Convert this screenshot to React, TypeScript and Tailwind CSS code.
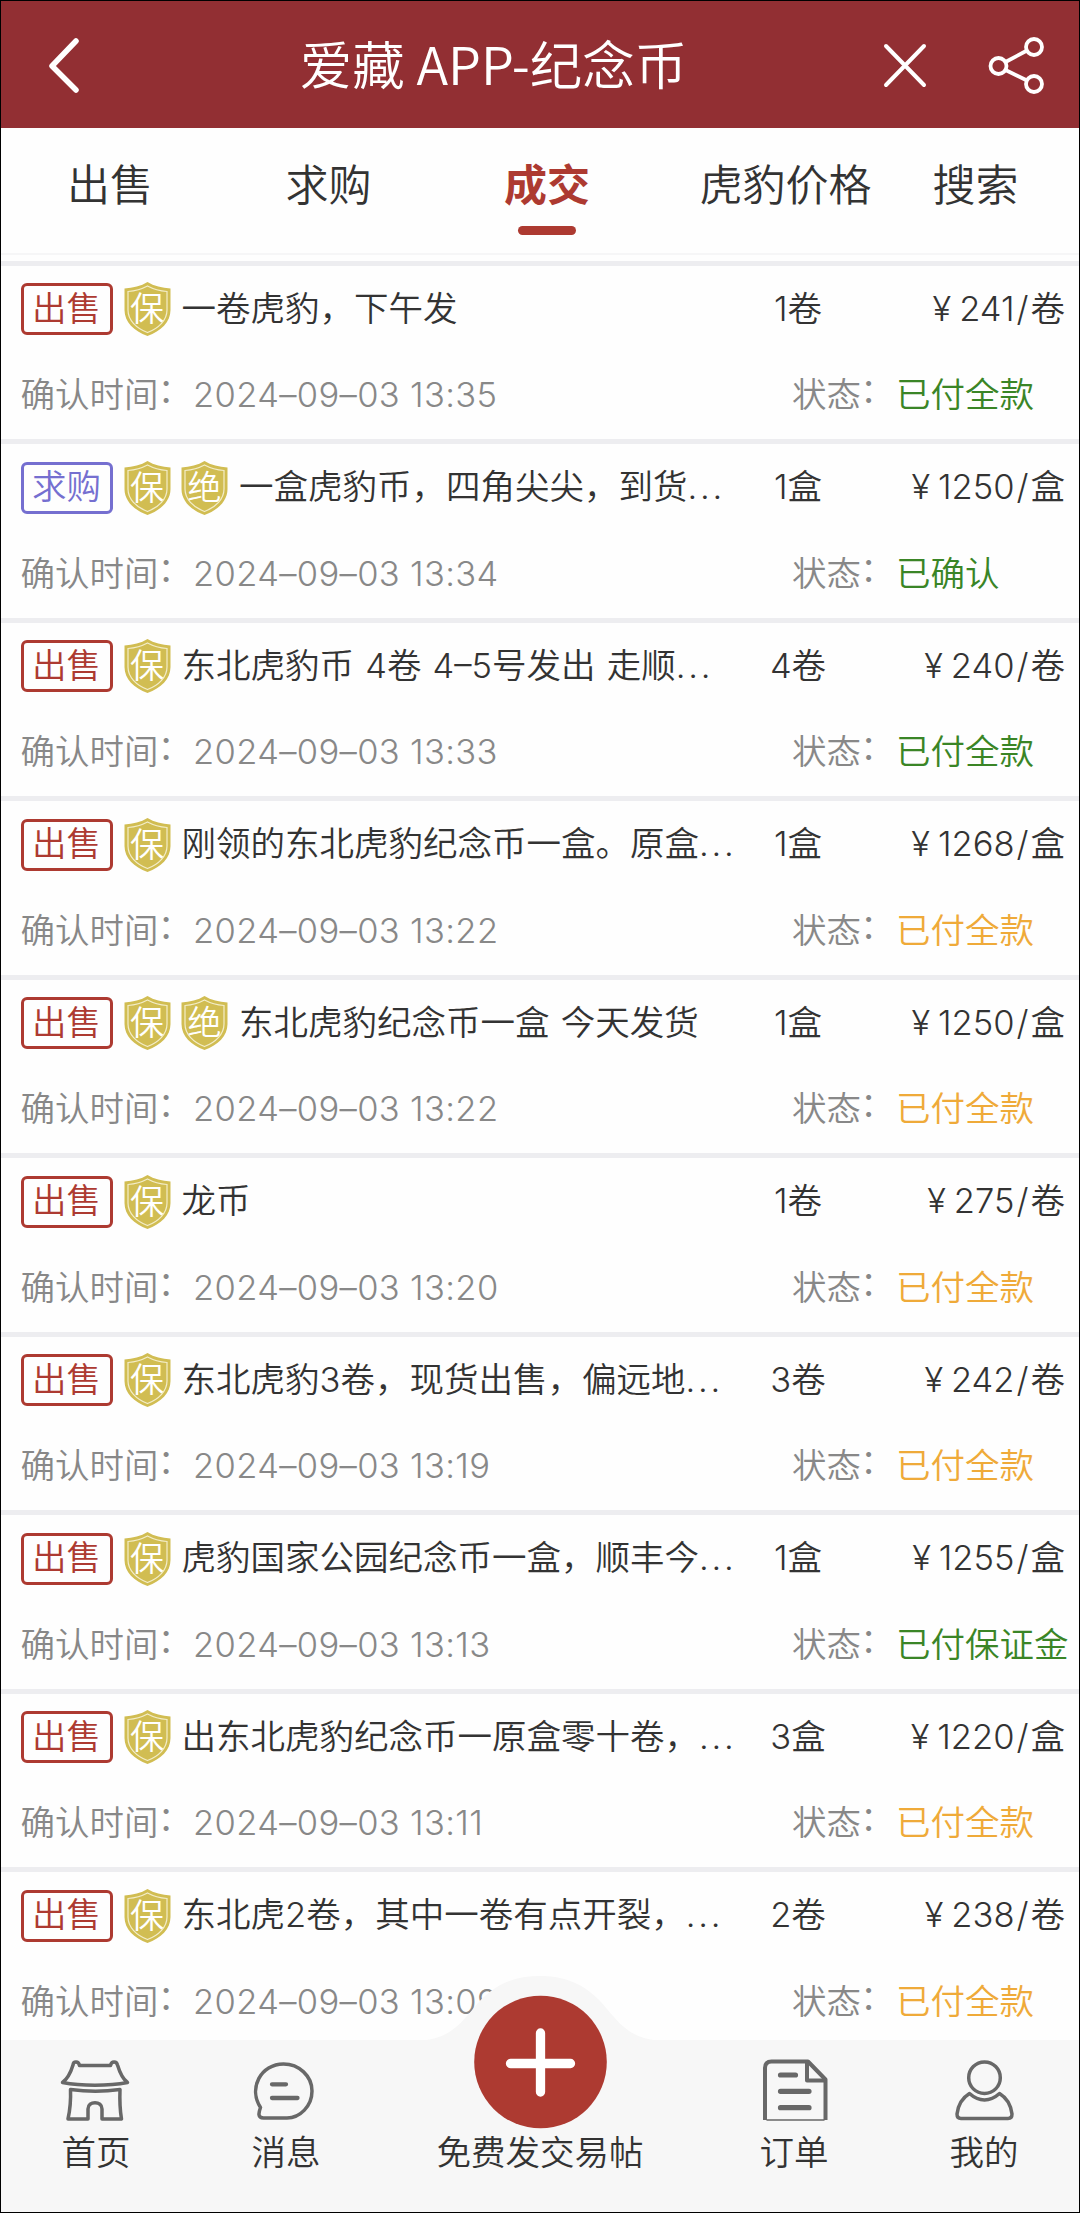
import type { ReactNode } from "react";

type Status = "green" | "orange";

type Deal = {
  kind: "出售" | "求购";
  marks: string[];
  title: string;
  cut?: boolean;
  amount: string;
  price: string;
  unit: string;
  time: string;
  status: string;
  tone: Status;
};

const deals: Deal[] = [
  { kind: "出售", marks: ["保"], title: "一卷虎豹，下午发", amount: "1", price: "241", unit: "卷", time: "13:35", status: "已付全款", tone: "green" },
  { kind: "求购", marks: ["保", "绝"], title: "一盒虎豹币，四角尖尖，到货", cut: true, amount: "1", price: "1250", unit: "盒", time: "13:34", status: "已确认", tone: "green" },
  { kind: "出售", marks: ["保"], title: "东北虎豹币 4卷 4–5号发出 走顺", cut: true, amount: "4", price: "240", unit: "卷", time: "13:33", status: "已付全款", tone: "green" },
  { kind: "出售", marks: ["保"], title: "刚领的东北虎豹纪念币一盒。原盒", cut: true, amount: "1", price: "1268", unit: "盒", time: "13:22", status: "已付全款", tone: "orange" },
  { kind: "出售", marks: ["保", "绝"], title: "东北虎豹纪念币一盒 今天发货", amount: "1", price: "1250", unit: "盒", time: "13:22", status: "已付全款", tone: "orange" },
  { kind: "出售", marks: ["保"], title: "龙币", amount: "1", price: "275", unit: "卷", time: "13:20", status: "已付全款", tone: "orange" },
  { kind: "出售", marks: ["保"], title: "东北虎豹3卷，现货出售，偏远地", cut: true, amount: "3", price: "242", unit: "卷", time: "13:19", status: "已付全款", tone: "orange" },
  { kind: "出售", marks: ["保"], title: "虎豹国家公园纪念币一盒，顺丰今", cut: true, amount: "1", price: "1255", unit: "盒", time: "13:13", status: "已付保证金", tone: "green" },
  { kind: "出售", marks: ["保"], title: "出东北虎豹纪念币一原盒零十卷，", cut: true, amount: "3", price: "1220", unit: "盒", time: "13:11", status: "已付全款", tone: "orange" },
  { kind: "出售", marks: ["保"], title: "东北虎2卷，其中一卷有点开裂，", cut: true, amount: "2", price: "238", unit: "卷", time: "13:09", status: "已付全款", tone: "orange" },
];

const tabs = [
  { label: "出售", width: "w-[218px]" },
  { label: "求购", width: "w-[219px]" },
  { label: "成交", width: "w-[218px]", active: true },
  { label: "虎豹价格", width: "w-[259px]" },
  { label: "搜索", width: "w-[121px]" },
];

function Header() {
  return (
    <header className="flex h-[127px] shrink-0 items-center bg-[#922f33] text-white">
      <div className="flex w-[180px] pl-[46px]">
        <svg width="34" height="56" viewBox="0 0 34 56" fill="none" stroke="currentColor" strokeWidth="5.5" strokeLinecap="round" strokeLinejoin="round">
          <path d="M29 4 L5 29 L29 53" />
        </svg>
      </div>
      <h1 className="mt-[-4px] flex-1 pr-[11px] text-center font-['Noto_Sans_CJK_SC',sans-serif] text-[52.5px] leading-none font-[350] whitespace-nowrap">
        爱藏 APP-纪念币
      </h1>
      <div className="flex w-[262px] items-center">
        <svg className="ml-[65px]" width="46" height="46" viewBox="0 0 46 46" fill="none" stroke="currentColor" strokeWidth="4" strokeLinecap="round">
          <path d="M4 4 L42 43 M42 4 L4 43" />
        </svg>
        <svg className="ml-[59px]" width="58" height="60" viewBox="0 0 58 60" fill="none" stroke="currentColor" strokeWidth="3.8">
          <circle cx="11.5" cy="31" r="8" />
          <circle cx="47" cy="12" r="8" />
          <circle cx="47" cy="49" r="8" />
          <path d="M18.5 27 L40 15.5 M18.5 35 L40 45.5" />
        </svg>
      </div>
    </header>
  );
}

function Tabs() {
  return (
    <nav className="flex h-[127px] shrink-0 border-b-2 border-[#f6f6f7] text-[43px] text-[#333]">
      {tabs.map((tab) => (
        <div key={tab.label} className={`${tab.width} flex flex-col items-center pt-[35px]`}>
          <span className={tab.active ? "leading-[44px] font-bold text-[#ad3a31]" : "leading-[44px]"}>{tab.label}</span>
          {tab.active && <span className="mt-[19px] h-[9px] w-[58px] rounded-full bg-[#ad3a31]" />}
        </div>
      ))}
    </nav>
  );
}

function Shield({ mark }: { mark: string }) {
  return (
    <span className="mr-[11px] grid h-[54px] w-[46.5px] shrink-0 place-items-center text-white">
      <svg className="col-start-1 row-start-1" width="47" height="54" viewBox="0 0 47 54">
        <path d="M23.5 0 C30 4 38 6 46.5 6.5 V28 C46.5 40 37 49 23.5 54 C10 49 .5 40 .5 28 V6.5 C9 6 17 4 23.5 0 Z" fill="#d1bd52" />
        <path d="M23.5 4 C30 7.5 36 9 43 9.5 V28 C43 38 35 46 23.5 50.5 C12 46 4 38 4 28 V9.5 C11 9 17 7.5 23.5 4 Z" fill="none" stroke="#f3edc9" strokeWidth="1.2" />
      </svg>
      <span className="col-start-1 row-start-1 text-[34px] leading-none">{mark}</span>
    </span>
  );
}

function Colon() {
  return <span className="inline-block -translate-x-px -translate-y-[4px]">：</span>;
}

function DealRow({ deal }: { deal: Deal }) {
  const kindColor = deal.kind === "求购" ? "border-[#756fd0] text-[#756fd0]" : "border-[#ad3a31] text-[#ad3a31]";
  const statusColor = deal.tone === "green" ? "text-[#3a8526]" : "text-[#efaa39]";

  return (
    <li className="h-[178.5px] shrink-0 border-t-[5.5px] border-[#ededf0] pr-[18px] pl-[19.5px] text-[34.5px]">
      <div className="mt-[17px] flex h-[53px] items-center">
        <span className={`${kindColor} mr-[11px] flex h-[52px] w-[92px] shrink-0 items-center justify-center rounded-[6px] border-[3px] leading-none`}>
          {deal.kind}
        </span>
        {deal.marks.map((mark) => (
          <Shield key={mark} mark={mark} />
        ))}
        <span className="flex-1 pl-[0.5px] leading-none whitespace-nowrap text-[#333] [word-spacing:1.5px]">
          {deal.title}
          {deal.cut && <span className="tracking-[0.08em]">...</span>}
        </span>
        <span className="w-[112px] shrink-0 text-center leading-none text-[#333]">
          {deal.amount}
          {deal.unit}
        </span>
        <span className="mr-[-4px] flex w-[211px] shrink-0 justify-end leading-none text-[#333]">
          <span className="w-[34.5px] text-center">¥</span>
          <span>{deal.price}</span>
          <span className="px-[2px]">/</span>
          {deal.unit}
        </span>
      </div>
      <div className="mt-[35px] flex h-[50px] items-center leading-none text-[#888]">
        <span>
          确认时间
          <Colon />
        </span>
        <span className="flex-1 tracking-[0.01em]">2024–09–03 {deal.time}</span>
        <span className="w-[104px]">
          状态
          <Colon />
        </span>
        <span className={`${statusColor} w-[165px] whitespace-nowrap`}>{deal.status}</span>
      </div>
    </li>
  );
}

function NavItem({ label, children }: { label: string; children: ReactNode }) {
  return (
    <div className="flex w-[190px] flex-col items-center pt-[19px]">
      <svg width="72" height="64" viewBox="0 0 72 64" fill="none" stroke="#686868" strokeWidth="3.5" strokeLinecap="round" strokeLinejoin="round">
        {children}
      </svg>
      <span className="mt-[12px] leading-[36px]">{label}</span>
    </div>
  );
}

function BottomNav() {
  return (
    <footer className="relative flex h-[172px] shrink-0 bg-[#f7f7f7] text-[34.5px] text-[#333]">
      <NavItem label="首页">
        <path d="M2.5 23.5 C8.5 19 11.5 11 13 6 C13.5 2 18.5 2 19.5 6.5 H50.5 C51.5 2 56.5 2 57.5 6 C59 11 61.5 19 67.5 23.5 C48.5 27 21.5 27 2.5 23.5 Z" />
        <path d="M10.5 30.5 C25.5 32.5 45.5 32.5 60 30.5 C59.5 43 60 51 61.5 60 H42 V50 C42 41.5 28 41.5 28 50 V60 H8 C10 51 11 43 10.5 30.5 Z" />
      </NavItem>
      <NavItem label="消息">
        <path d="M10.5 48.5 C-2 29 11 5 33.5 5 C49 5 62 17 62 32 C62 47 50 59 37 59 H13.5 C7.5 59 8.5 54 10.5 48.5 Z" />
        <path d="M22 25.3 H36 M22 39 H47.5" strokeWidth="4.3" />
      </NavItem>
      <div className="flex w-[318px] flex-col items-center pt-[95px]">
        <svg className="absolute top-[-64px] left-[418px]" width="242" height="160" viewBox="0 0 242 160">
          <path d="M0 64.5 C27 64 40 50 54 33 C72 10 93 0 121 0 C149 0 170 10 188 33 C202 50 215 64 242 64.5 V160 H0 Z" fill="#f7f7f7" />
          <circle cx="121.5" cy="86" r="66.3" fill="#ad3a31" />
          <path d="M91.5 87.5 H151.5 M121.5 57 V116" stroke="#fff" strokeWidth="9.3" strokeLinecap="round" />
        </svg>
        <span className="relative leading-[36px] whitespace-nowrap">免费发交易帖</span>
      </div>
      <NavItem label="订单">
        <path d="M7 61 V9 Q7 2.5 13.5 2.5 H50 L67.5 20.5 V61" strokeWidth="4" strokeLinecap="butt" />
        <path d="M49 3 V21.5 H67" strokeWidth="4" />
        <path d="M9 61 H66" strokeWidth="1.5" />
        <path d="M22.5 16 H37.5 M22.5 32.3 H51 M22.5 48.7 H51" strokeWidth="5.2" />
      </NavItem>
      <NavItem label="我的">
        <circle cx="36.5" cy="18.7" r="15.8" />
        <path d="M21.5 34.5 C31 43 42 43 51.5 34.5 C59 39 63 47 64 55 Q64 59.5 60 59.5 H13 Q9 59.5 9 55 C10 47 14 39 21.5 34.5 Z" />
      </NavItem>
    </footer>
  );
}

export default function App() {
  return (
    <div className="flex h-[2213px] w-[1080px] flex-col overflow-hidden border border-black bg-[#fefefe] font-['Inter','Noto_Sans_CJK_SC',sans-serif] font-[350]">
      <Header />
      <Tabs />
      <ul className="mt-[5.5px] flex min-h-0 flex-1 flex-col overflow-hidden">
        {deals.map((deal) => (
          <DealRow key={deal.title} deal={deal} />
        ))}
      </ul>
      <BottomNav />
    </div>
  );
}
